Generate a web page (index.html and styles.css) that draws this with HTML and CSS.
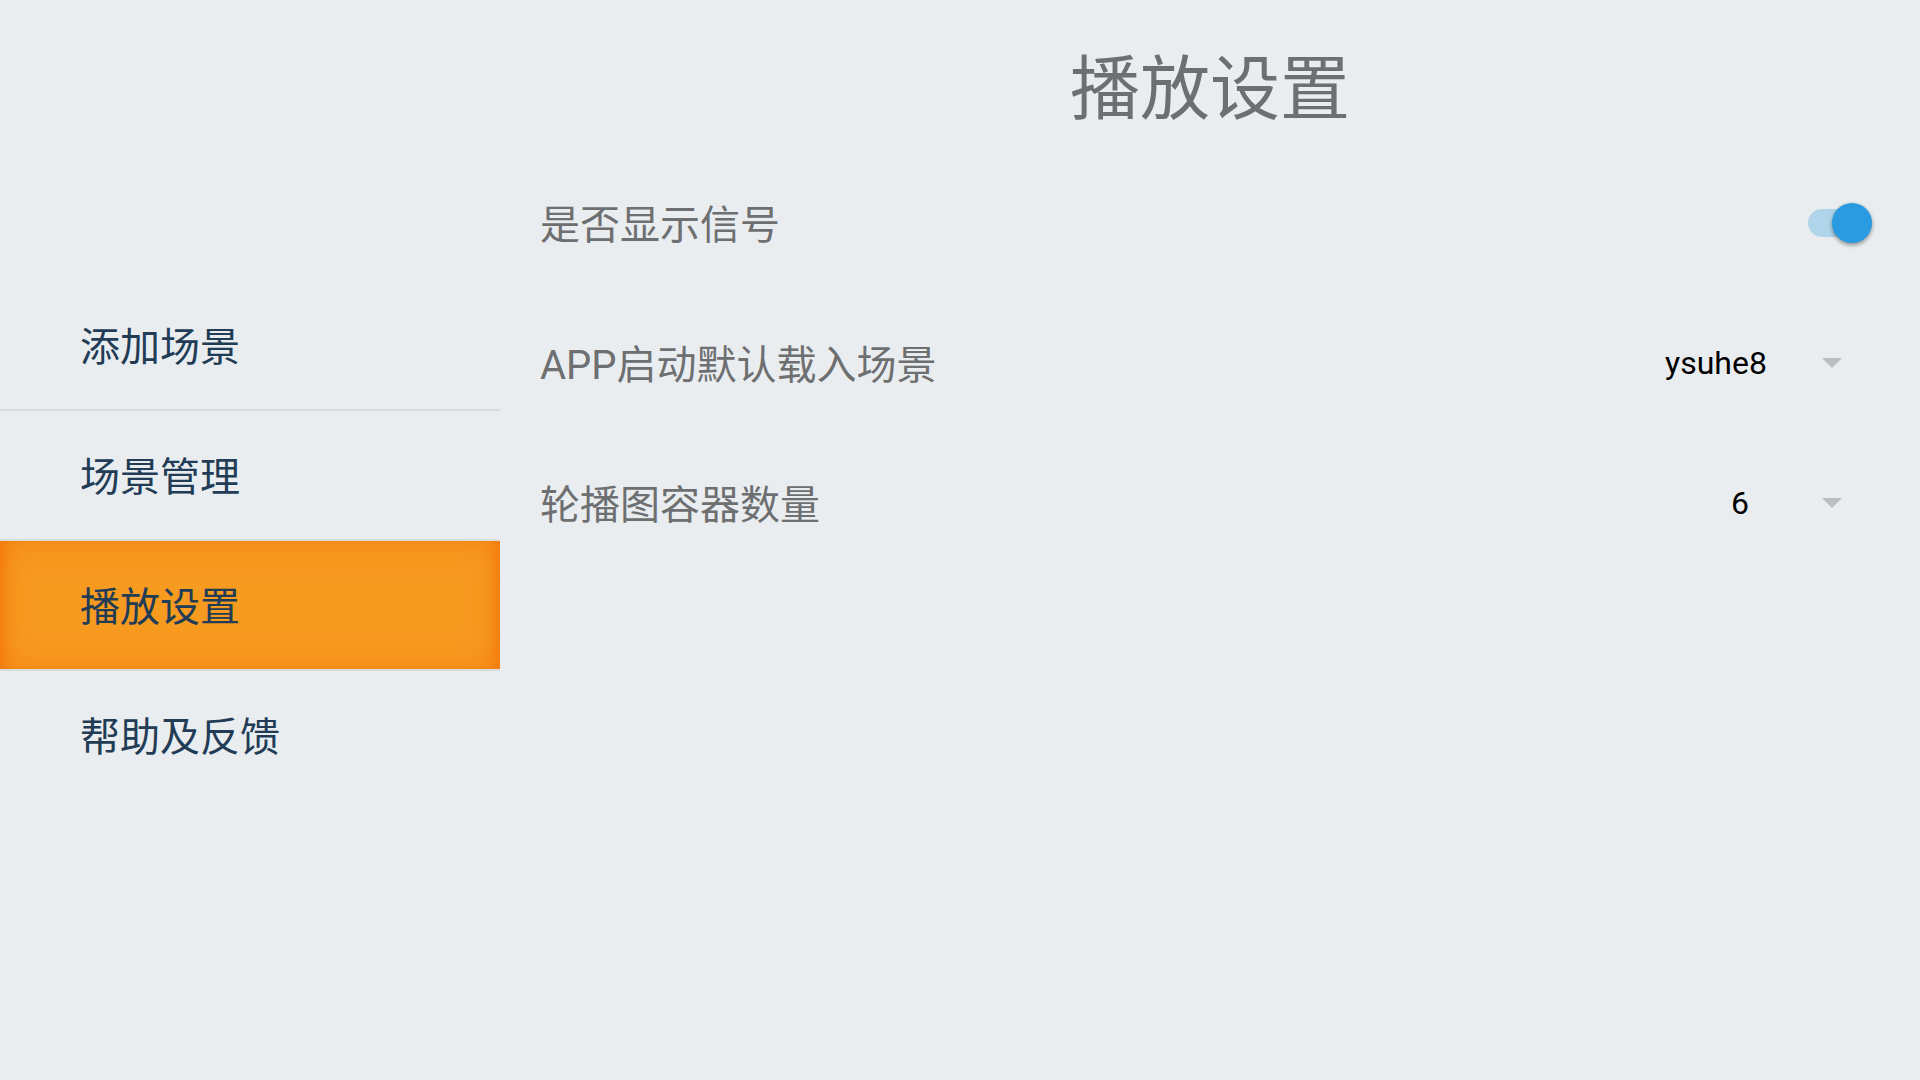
FILE: index.html
```html
<!DOCTYPE html>
<html lang="zh-CN">
<head>
<meta charset="utf-8">
<title>播放设置</title>
<link rel="stylesheet" href="styles.css">
</head>
<body>
<nav class="sidebar">
  <a class="nav-item" href="#add">添加场景</a>
  <a class="nav-item" href="#manage">场景管理</a>
  <a class="nav-item active" href="#playback" aria-current="page">播放设置</a>
  <a class="nav-item" href="#help">帮助及反馈</a>
</nav>
<main class="content">
  <h1 class="title">播放设置</h1>
  <div class="row">
    <label class="label" for="signal">是否显示信号</label>
    <input class="switch" type="checkbox" role="switch" id="signal" checked>
  </div>
  <div class="row">
    <label class="label" for="scene">APP启动默认载入场景</label>
    <div class="picker">
      <select class="select select-scene" id="scene"><option>ysuhe8</option></select>
      <svg class="arrow" viewBox="0 0 20 10" aria-hidden="true"><path d="M0 0H20L10 10Z"/></svg>
    </div>
  </div>
  <div class="row">
    <label class="label" for="count">轮播图容器数量</label>
    <div class="picker">
      <select class="select select-count" id="count"><option>6</option></select>
      <svg class="arrow" viewBox="0 0 20 10" aria-hidden="true"><path d="M0 0H20L10 10Z"/></svg>
    </div>
  </div>
</main>
</body>
</html>
```
FILE: styles.css
```css
* { box-sizing: border-box; }
body {
  margin: 0;
  min-height: 100vh;
  display: flex;
  background: #e9edf0;
  font-family: Roboto, "Noto Sans CJK SC", sans-serif;
}
.sidebar {
  flex: 0 0 500px;
  display: flex;
  flex-direction: column;
  justify-content: center;
  gap: 2px;
}
.nav-item {
  display: flex;
  align-items: center;
  height: 128px;
  padding: 0 0 2px 80px;
  color: #223c56;
  font-size: 40px;
  text-decoration: none;
}
.nav-item:not(:last-child) { box-shadow: 0 2px #d8dcdf; }
.nav-item.active {
  background: #f79a20;
  box-shadow:
    0 2px #d8dcdf,
    inset 0 0 32px #f5780cb0,
    inset 16px 0 16px -16px #f06c06,
    inset -16px 0 16px -16px #f06c06;
}
.content {
  flex: 1;
  min-width: 0;
  padding: 0 40px;
}
.title {
  margin: 0;
  padding-top: 38px;
  height: 153px;
  color: #6e6f70;
  font-size: 70px;
  font-weight: 400;
  line-height: 104px;
  text-align: center;
}
.row {
  display: flex;
  align-items: center;
  justify-content: space-between;
  height: 140px;
}
.label {
  padding-bottom: 2px;
  color: #6e6f70;
  font-size: 40px;
}
.switch {
  appearance: none;
  display: flex;
  align-items: center;
  justify-content: flex-end;
  width: 64px;
  height: 28px;
  margin: 0 8px;
  border-radius: 14px;
  background: #b0d5ea;
}
.switch::before {
  content: "";
  width: 40px;
  height: 40px;
  border-radius: 50%;
  background: #2a9be0;
  box-shadow: 0 2px 4px #0006;
}
.picker {
  display: flex;
  align-items: center;
  padding-right: 38px;
}
.select {
  appearance: none;
  padding: 0;
  border: 0;
  background: none;
  color: #000;
  font: 32px Roboto, "Noto Sans CJK SC", sans-serif;
  text-align: center;
  text-align-last: center;
}
.select-scene { width: 212px; }
.select-count { width: 164px; }
.arrow {
  width: 20px;
  height: 10px;
  fill: #bbbfc2;
}
```
